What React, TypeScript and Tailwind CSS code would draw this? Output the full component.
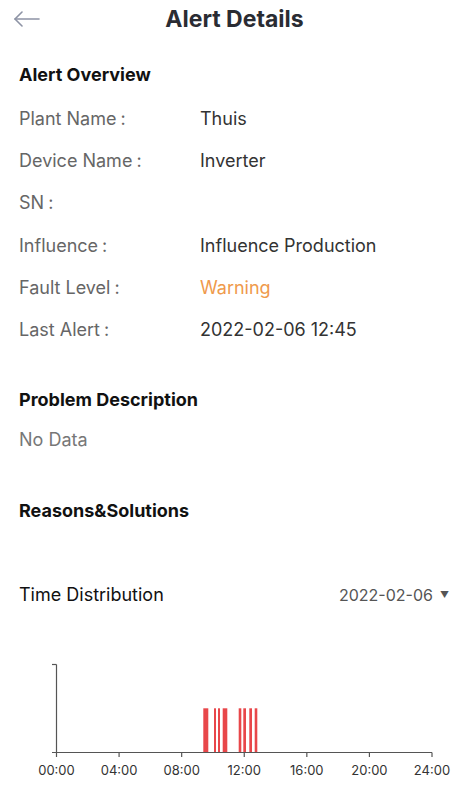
import React from 'react';

const FONT = { fontFamily: 'Inter, "Noto Sans", sans-serif' };

const ROWS: { label: string; value: string; warn?: boolean }[] = [
  { label: 'Plant Name', value: 'Thuis' },
  { label: 'Device Name', value: 'Inverter' },
  { label: 'SN', value: '' },
  { label: 'Influence', value: 'Influence Production' },
  { label: 'Fault Level', value: 'Warning', warn: true },
  { label: 'Last Alert', value: '2022-02-06 12:45' },
];

// bar x ranges in page pixels (chart spans x 56.5 → 432)
const BARS: [number, number][] = [
  [203.3, 208.3],
  [214, 216],
  [218, 220],
  [222.7, 227.3],
  [238.7, 241.3],
  [243.3, 246],
  [249.3, 252],
  [254.7, 257.3],
];

const TICKS = ['00:00', '04:00', '08:00', '12:00', '16:00', '20:00', '24:00'];

function TimeChart() {
  const x0 = 56.5;
  const x1 = 432;
  const top = 51.5;
  const axisY = 139.5;
  const barTop = 95.3;
  const step = (x1 - x0) / 6;
  return (
    <svg width="469" height="186" viewBox="0 0 469 186" className="block">
      {BARS.map(([a, b], i) => (
        <rect key={i} x={a} y={barTop} width={b - a} height={axisY - barTop} fill="#e8474a" />
      ))}
      <line x1={x0} y1={top} x2={x0} y2={axisY} stroke="#555" strokeWidth="1.2" />
      <line x1={52} y1={top} x2={x0} y2={top} stroke="#555" strokeWidth="1.2" />
      <line x1={52} y1={axisY} x2={x1} y2={axisY} stroke="#555" strokeWidth="1.2" />
      {TICKS.map((t, i) => {
        const x = x0 + step * i;
        return (
          <g key={t}>
            <line x1={x} y1={axisY} x2={x} y2={axisY + 4.5} stroke="#555" strokeWidth="1.2" />
            <text x={x} y={161.5} textAnchor="middle" fontSize="13" fill="#333" style={FONT}>
              {t}
            </text>
          </g>
        );
      })}
    </svg>
  );
}

export default function App() {
  return (
    <div className="w-[469px] h-[800px] bg-white overflow-hidden" style={FONT}>
      {/* Header */}
      <div className="relative h-[37px] pt-[1px] flex items-center justify-center">
        <svg
          className="absolute left-[13px] top-[11px]"
          width="27"
          height="16"
          viewBox="0 0 27 16"
          fill="none"
          stroke="#8d93a5"
          strokeWidth="1.6"
          strokeLinecap="round"
          strokeLinejoin="round"
        >
          <path d="M26 8H2" />
          <path d="M9 1L2 8l7 7" />
        </svg>
        <h1 className="text-[23px] font-bold text-[#2a2c33]">Alert Details</h1>
      </div>

      <div className="px-[19px]">
        {/* Alert Overview */}
        <div className="mt-[19px] h-[36px] flex items-center text-[18px] font-bold text-[#111]">
          Alert Overview
        </div>
        <div className="mt-[5px]">
          {ROWS.map((r) => (
            <div key={r.label} className="h-[42.3px] flex items-center text-[18px]">
              <span className="w-[181px] shrink-0 text-[#666]">
                {r.label}
                <span className="ml-[4px]">:</span>
              </span>
              <span className={r.warn ? 'text-[#ef9a4b]' : 'text-[#333]'}>{r.value}</span>
            </div>
          ))}
        </div>

        {/* Problem Description */}
        <div className="mt-[31px] h-[36px] flex items-center text-[18px] font-bold text-[#111]">
          Problem Description
        </div>
        <div className="h-[44px] flex items-center text-[18px] text-[#777]">No Data</div>

        {/* Reasons */}
        <div className="mt-[31px] h-[36px] flex items-center text-[18px] font-bold text-[#111]">
          Reasons&amp;Solutions
        </div>

        {/* Time distribution */}
        <div className="mt-[48px] h-[36px] flex items-center justify-between">
          <span className="text-[18px] text-[#111]">Time Distribution</span>
          <span className="flex items-center gap-[7px] text-[16px] text-[#555] mr-[1px]">
            2022-02-06
            <span className="text-[9px] text-[#555]">▼</span>
          </span>
        </div>
      </div>

      <TimeChart />
    </div>
  );
}
